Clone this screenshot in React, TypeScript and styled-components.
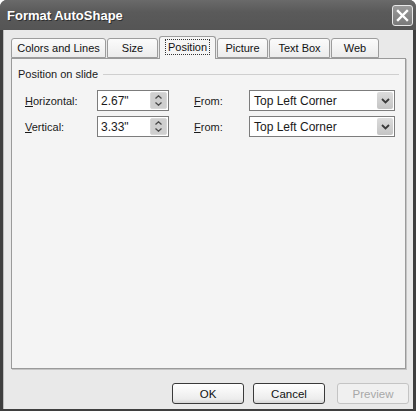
import styled, { createGlobalStyle } from "styled-components";

const GlobalStyle = createGlobalStyle`
  html, body {
    margin: 0;
    padding: 0;
    background: #ffffff;
  }
  body {
    font-family: "Liberation Sans", Arial, sans-serif;
  }
`;

interface TabProps {
  label: string;
  width: number;
  active?: boolean;
}

const tabs: TabProps[] = [
  { label: "Colors and Lines", width: 95 },
  { label: "Size", width: 51 },
  { label: "Position", width: 57, active: true },
  { label: "Picture", width: 51 },
  { label: "Text Box", width: 61 },
  { label: "Web", width: 48 },
];

function Spinner() {
  return (
    <SpinBox>
      <SpinHalf>
        <svg width="7" height="4" viewBox="0 0 7 4">
          <path d="M0.5 3.5 L3.5 0.8 L6.5 3.5" fill="none" stroke="#4a4a4a" strokeWidth="1.3" />
        </svg>
      </SpinHalf>
      <SpinHalf>
        <svg width="7" height="4" viewBox="0 0 7 4">
          <path d="M0.5 0.5 L3.5 3.2 L6.5 0.5" fill="none" stroke="#4a4a4a" strokeWidth="1.3" />
        </svg>
      </SpinHalf>
    </SpinBox>
  );
}

function Dropdown({ value }: { value: string }) {
  return (
    <Select>
      <span>{value}</span>
      <DropButton>
        <svg width="9" height="6" viewBox="0 0 9 6">
          <path d="M1 1 L4.5 4.5 L8 1" fill="none" stroke="#3a3a3a" strokeWidth="1.8" />
        </svg>
      </DropButton>
    </Select>
  );
}

function PositionRow({ mnemonic, rest, value }: { mnemonic: string; rest: string; value: string }) {
  return (
    <Row>
      <Label>
        <u>{mnemonic}</u>
        {rest}
      </Label>
      <Input>
        <span>{value}</span>
        <Spinner />
      </Input>
      <span />
      <Label>
        <u>F</u>rom:
      </Label>
      <Dropdown value="Top Left Corner" />
    </Row>
  );
}

export default function App() {
  return (
    <>
      <GlobalStyle />
      <Window>
        <TitleBar>
          <Title>Format AutoShape</Title>
          <CloseButton>
            <svg width="13" height="13" viewBox="0 0 13 13">
              <path d="M2 2 L11 11 M11 2 L2 11" stroke="#ffffff" strokeWidth="2.4" strokeLinecap="square" />
            </svg>
          </CloseButton>
        </TitleBar>
        <Frame>
          <TabRow>
            {tabs.map((t) => (
              <Tab key={t.label} $w={t.width} $active={t.active}>
                {t.active ? <Focus>{t.label}</Focus> : t.label}
              </Tab>
            ))}
          </TabRow>
          <Panel>
            <GroupHeader>
              <span>Position on slide</span>
              <Rule />
            </GroupHeader>
            <Rows>
              <PositionRow mnemonic="H" rest="orizontal:" value={'2.67"'} />
              <PositionRow mnemonic="V" rest="ertical:" value={'3.33"'} />
            </Rows>
          </Panel>
          <ButtonRow>
            <Button>OK</Button>
            <Button>Cancel</Button>
            <Button $disabled>Preview</Button>
          </ButtonRow>
        </Frame>
      </Window>
    </>
  );
}

const Window = styled.div`
  width: 416px;
  height: 411px;
  display: flex;
  flex-direction: column;
  border-radius: 7px 7px 0 0;
  overflow: hidden;
  background: #3f3f3f;
`;

const TitleBar = styled.div`
  height: 30px;
  flex: none;
  display: flex;
  align-items: center;
  justify-content: space-between;
  padding: 0 3px 0 7px;
  background: linear-gradient(#6a6a6a, #5a5a5a 40%, #555555);
`;

const Title = styled.div`
  color: #ffffff;
  font-weight: bold;
  font-size: 13px;
  text-shadow: 1px 1px 0 #2e2e2e;
`;

const CloseButton = styled.div`
  width: 19px;
  height: 19px;
  display: flex;
  align-items: center;
  justify-content: center;
  border: 1px solid #e8e8e8;
  border-radius: 3px;
  background: linear-gradient(#9a9a9a, #7a7a7a);
`;

const Frame = styled.div`
  flex: 1;
  display: flex;
  flex-direction: column;
  margin: 0 3px 3px 3px;
  padding: 0 7px 5px 7px;
  background: #e9e9e9;
  border-left: 1px solid #bdbdbd;
`;

const TabRow = styled.div`
  display: flex;
  align-items: flex-end;
  gap: 1px;
  padding-top: 6px;
  position: relative;
  z-index: 1;
  font-size: 11px;
`;

const Tab = styled.div<{ $w: number; $active?: boolean }>`
  box-sizing: border-box;
  width: ${(p) => p.$w}px;
  height: ${(p) => (p.$active ? 23 : 20)}px;
  margin-bottom: ${(p) => (p.$active ? -1 : 0)}px;
  display: flex;
  align-items: center;
  justify-content: center;
  padding-bottom: ${(p) => (p.$active ? 3 : 0)}px;
  border: 1px solid #9c9c9c;
  border-bottom: ${(p) => (p.$active ? "none" : "1px solid #9c9c9c")};
  border-radius: 3px 3px 0 0;
  background: ${(p) => (p.$active ? "#f5f5f5" : "linear-gradient(#fbfbfb, #ececec)")};
  color: #111111;
`;

const Focus = styled.span`
  outline: 1px dotted #333333;
  padding: 1px 2px;
`;

const Panel = styled.div`
  box-sizing: border-box;
  height: 311px;
  border: 1px solid #9a9a9a;
  background: #f4f4f4;
  box-shadow: 1px 1px 0 #c4c4c4;
  padding: 8px 6px 0 6px;
  font-size: 11px;
  color: #1a1a1a;
`;

const GroupHeader = styled.div`
  display: flex;
  align-items: center;
  gap: 5px;
  height: 14px;
`;

const Rule = styled.div`
  flex: 1;
  height: 1px;
  background: #cfcfcf;
`;

const Rows = styled.div`
  display: flex;
  flex-direction: column;
  gap: 5px;
  padding: 9px 0 0 7px;
`;

const Row = styled.div`
  display: grid;
  grid-template-columns: 72px 72px 25px 55px 146px;
  align-items: center;
  height: 21px;
`;

const Label = styled.span`
  white-space: nowrap;
`;

const Input = styled.div`
  box-sizing: border-box;
  height: 21px;
  display: flex;
  align-items: center;
  justify-content: space-between;
  padding: 0 1px 0 3px;
  border: 1px solid #7c7c7c;
  background: #ffffff;
  font-size: 12px;
`;

const SpinBox = styled.div`
  width: 15px;
  height: 15px;
  display: flex;
  flex-direction: column;
  border-radius: 2px;
  overflow: hidden;
  background: #cfcfcf;
  border: 1px solid #d8d8d8;
`;

const SpinHalf = styled.div`
  flex: 1;
  display: flex;
  align-items: center;
  justify-content: center;
`;

const Select = styled.div`
  box-sizing: border-box;
  height: 21px;
  display: flex;
  align-items: center;
  justify-content: space-between;
  padding: 0 1px 0 4px;
  border: 1px solid #7c7c7c;
  background: #ffffff;
  font-size: 12px;
`;

const DropButton = styled.div`
  width: 16px;
  height: 17px;
  display: flex;
  align-items: center;
  justify-content: center;
  border-radius: 2px;
  background: linear-gradient(#dcdcdc, #c4c4c4);
`;

const ButtonRow = styled.div`
  display: flex;
  justify-content: flex-end;
  gap: 9px;
  margin: 14px -3px 0 0;
`;

const Button = styled.div<{ $disabled?: boolean }>`
  box-sizing: border-box;
  width: 72px;
  height: 21px;
  margin-left: ${(p) => (p.$disabled ? 3 : 0)}px;
  display: flex;
  align-items: center;
  justify-content: center;
  border: 1px solid ${(p) => (p.$disabled ? "#c4c4c4" : "#3a3a3a")};
  border-radius: 3px;
  background: ${(p) => (p.$disabled ? "#f0f0f0" : "linear-gradient(#ffffff, #ececec 80%, #d6d6d6)")};
  color: ${(p) => (p.$disabled ? "#a8a8a8" : "#111111")};
  font-size: 11.5px;
`;
